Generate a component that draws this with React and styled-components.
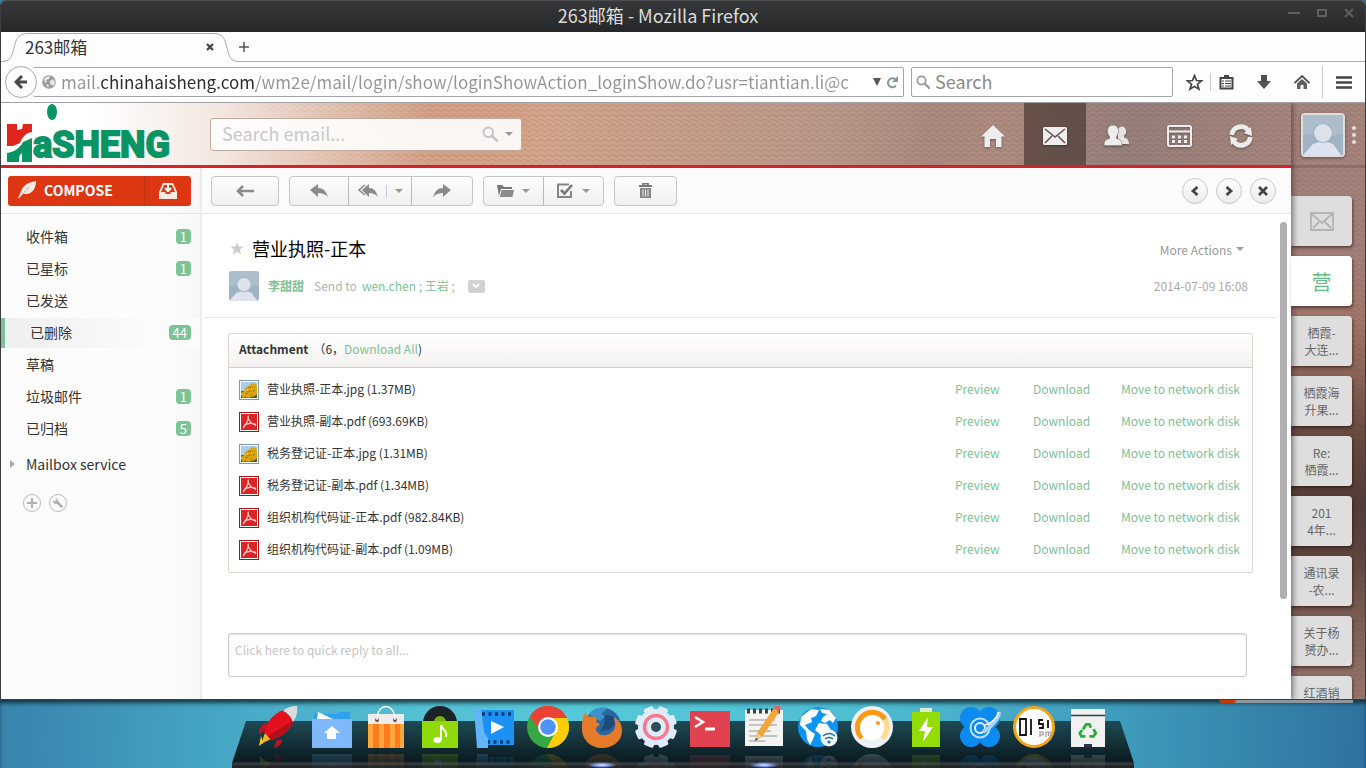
import React from "react";
import styled, { createGlobalStyle, css } from "styled-components";

const GlobalStyle = createGlobalStyle`
  * { box-sizing: border-box; }
  body {
    margin: 0;
    font-family: "Noto Sans CJK SC", "Noto Sans", sans-serif;
    font-size: 12px;
    color: #333;
  }
  button, input, textarea { font: inherit; color: inherit; margin: 0; }
  button { border: 0; background: none; padding: 0; cursor: pointer; display: flex; align-items: center; justify-content: center; }
  a { color: inherit; text-decoration: none; }
  ul { list-style: none; margin: 0; padding: 0; }
  svg { display: block; flex: none; }
`;

const GREEN = "#7cc396";

const zigzag = css`
  url("data:image/svg+xml,%3Csvg xmlns='http://www.w3.org/2000/svg' width='8' height='5'%3E%3Cpath d='M0 4l4-3 4 3' fill='none' stroke='%23502014' stroke-opacity='.13'/%3E%3C/svg%3E")
`;

/* ---------- desktop and window ---------- */

const Desktop = styled.div`
  height: 100vh;
  display: flex;
  flex-direction: column;
  overflow: hidden;
  background: linear-gradient(92deg, #3680aa 0, #3e90b5 8%, #45a5c3 17%, #53c0d4 32%, #55c8d8 45%, #4fbfd3 62%, #3f9bbc 82%, #2e739d 100%);
`;

const Window = styled.section`
  flex: 1;
  min-height: 0;
  display: flex;
  flex-direction: column;
  border: 1px solid #3b3d3e;
  border-top-color: #4b4d4e;
  border-radius: 5px 5px 0 0;
  overflow: hidden;
  background: #fdfdfd;
`;

const TitleBar = styled.header`
  position: relative;
  height: 31px;
  flex: none;
  display: flex;
  align-items: center;
  justify-content: flex-end;
  gap: 17px;
  padding: 0 11px 7px 0;
  background: linear-gradient(#36383a, #252728);
  color: #5d5f60;
`;

const WindowTitle = styled.h1`
  position: absolute;
  inset: 0 50px 0 0;
  margin: 0;
  font-size: 18px;
  font-weight: 400;
  line-height: 28px;
  text-align: center;
  color: #dcdcdc;
  pointer-events: none;
`;

const TabStrip = styled.div`
  height: 30px;
  flex: none;
  display: flex;
`;

const TabBody = styled.div`
  width: 186px;
  margin-top: 1px;
  border-top: 1px solid #a9abac;
  display: flex;
  align-items: center;
  justify-content: space-between;
  font-size: 17px;
  line-height: 24px;
  color: #2e3436;
  padding: 0 0 2px;
`;

const TabTitle = styled.span`
  margin-left: -3px;
`;

const StripRest = styled.div`
  flex: 1;
  border-bottom: 1px solid #a9abac;
  display: flex;
  align-items: center;
  padding-left: 1px;
`;

const NavBar = styled.div`
  height: 41px;
  flex: none;
  display: flex;
  align-items: center;
  padding-left: 4px;
  border-bottom: 1px solid #a0a2a3;
`;

const BackButton = styled.button`
  width: 32px;
  height: 32px;
  border: 1px solid #a5abb2;
  border-radius: 50%;
  background: #fdfdfd;
  z-index: 1;
`;

const Field = styled.div`
  height: 30px;
  display: flex;
  align-items: center;
  background: #fff;
  border: 1px solid #a3a5a6;
  border-radius: 2px;
`;

const UrlField = styled(Field)`
  flex: 1;
  min-width: 0;
  margin-left: -4px;
  padding: 0 4px 0 9px;
  border-left: 0;
  gap: 5px;
`;

const UrlInput = styled.input`
  flex: 1;
  min-width: 0;
  height: 28px;
  border: 0;
  outline: 0;
  padding: 0 0 2px;
  font-size: 17px;
  -webkit-text-fill-color: transparent;
  background: linear-gradient(90deg, #949494 39px, #2b2b2b 39px, #2b2b2b 195px, #949494 195px);
  background-clip: text;
  -webkit-background-clip: text;
`;

const SearchField = styled(Field)`
  width: 262px;
  margin: 0 6px 0 7px;
  padding: 0 4px;
  gap: 5px;
`;

const PlainInput = styled.input`
  flex: 1;
  min-width: 0;
  height: 28px;
  border: 0;
  outline: 0;
  padding: 0 0 2px;
  background: transparent;
  font-size: 18px;
  color: #555;
  &::placeholder { color: ${(p) => p.$hint || "#8c8c8c"}; opacity: 1; }
`;

const ToolIcon = styled.button`
  width: ${(p) => p.$w}px;
  height: 30px;
`;

const Rule = styled.span`
  width: 1px;
  height: ${(p) => p.$h}px;
  margin-left: ${(p) => p.$before || 0}px;
  background: #c3cad6;
`;

/* ---------- web page ---------- */

const Page = styled.div`
  flex: 1;
  min-height: 0;
  display: flex;
  overflow: hidden;
`;

const Mail = styled.div`
  flex: 1;
  min-width: 0;
  display: flex;
  flex-direction: column;
  box-shadow: 1px 0 6px rgba(0, 0, 0, 0.5);
  z-index: 1;
`;

const Banner = styled.header`
  height: 65px;
  flex: none;
  display: flex;
  align-items: center;
  border-bottom: 3px solid #d2232a;
  padding: 0 19px 0 5px;
  background:
    linear-gradient(90deg, #fff 90px, rgba(255, 255, 255, 0.75) 220px, rgba(255, 255, 255, 0) 430px),
    ${zigzag},
    linear-gradient(100deg, #d3a186 38%, #d3a58b 42%, #b8978a 65%, #aa8a80 72%, #ad8b80 78%, #96807b 87%, #a5857c 100%);
`;

const Logo = styled.a`
  width: 170px;
  align-self: stretch;
  svg { overflow: visible; }
`;

const LogoText = styled.text`
  font-family: Roboto, "Liberation Sans", sans-serif;
  font-weight: 700;
  font-size: 36px;
`;

const MailSearch = styled.form`
  width: 312px;
  height: 33px;
  margin-left: 34px;
  padding: 0 8px 0 11px;
  display: flex;
  align-items: center;
  gap: 7px;
  border: 1px solid #c3aa9f;
  border-radius: 3px;
  background: rgba(255, 255, 255, 0.9);
`;

const MainNav = styled.nav`
  margin-left: auto;
  display: flex;
  align-self: stretch;
`;

const NavTile = styled.a`
  width: 62px;
  display: flex;
  align-items: center;
  justify-content: center;
  padding-top: 3px;
  background: ${(p) => (p.$on ? "rgba(60, 45, 38, 0.6)" : "transparent")};
  svg { filter: drop-shadow(0 1px 1px rgba(0, 0, 0, 0.35)); }
`;

const Columns = styled.div`
  flex: 1;
  min-height: 0;
  display: flex;
  background: #fff;
`;

const Sidebar = styled.aside`
  width: 201px;
  flex: none;
  border-right: 2px solid #ececec;
  background: linear-gradient(90deg, #fcfcfc 170px, #f7f7f7);
`;

const ComposeArea = styled.div`
  height: 46px;
  padding: 8px 9px 8px 7px;
  border-bottom: 1px solid #e4e4e4;
  display: flex;
`;

const Compose = styled.button`
  flex: 1;
  height: 30px;
  justify-content: flex-start;
  gap: 8px;
  padding: 0 0 2px 10px;
  border-radius: 3px 0 0 3px;
  background: #dc3612;
  color: #fff;
  font-weight: 700;
  font-size: 14px;
`;

const Receive = styled.button`
  width: 47px;
  height: 30px;
  border-left: 1px solid #c03214;
  border-radius: 0 3px 3px 0;
  background: #dc3612;
`;

const FolderList = styled.ul`
  padding: 8px 0 0;
  display: flex;
  flex-direction: column;
  gap: 2px;
`;

const Folder = styled.a`
  height: 30px;
  display: flex;
  align-items: center;
  justify-content: space-between;
  padding: 0 9px 2px 25px;
  font-size: 14px;
  border-left: 0 solid ${GREEN};
  ${(p) => p.$on && css`
    border-left-width: 4px;
    background: linear-gradient(90deg, #efefef, #fbfbfb 150px);
  `}
`;

const Badge = styled.span`
  height: 15px;
  padding: 0 4px;
  border-radius: 4px;
  background: ${GREEN};
  color: #fff;
  font-size: 13px;
  line-height: 15px;
`;

const Service = styled.a`
  display: flex;
  align-items: center;
  gap: 11px;
  height: 30px;
  margin-top: 6px;
  padding: 0 0 2px 9px;
  font-size: 14px;
`;

const SideTools = styled.div`
  display: flex;
  gap: 8px;
  padding: 14px 22px;
`;

const SideTool = styled.button`
  width: 18px;
  height: 18px;
  border: 1px solid #b9b9b9;
  border-radius: 50%;
`;

const Reader = styled.main`
  flex: 1;
  min-width: 0;
  display: flex;
  flex-direction: column;
`;

const Toolbar = styled.div`
  height: 46px;
  flex: none;
  display: flex;
  align-items: center;
  gap: 10px;
  padding: 0 15px 0 9px;
  background: #fbfbfb;
  border-bottom: 1px solid #e4e4e4;
`;

const Group = styled.div`
  height: 30px;
  display: flex;
  border: 1px solid #c6c6c6;
  border-radius: 4px;
  background: linear-gradient(#fdfdfd, #f0f0f0);
`;

const ToolButton = styled.button`
  width: ${(p) => p.$w}px;
  gap: 8px;
  & + & { border-left: 1px solid #b9b9b9; }
`;

const Pager = styled.div`
  margin-left: auto;
  display: flex;
  gap: 8px;
`;

const Round = styled.button`
  width: 26px;
  height: 26px;
  border: 1px solid #c9c9c9;
  border-radius: 50%;
  background: linear-gradient(#fdfdfd, #ececec);
`;

const Viewport = styled.div`
  flex: 1;
  min-height: 0;
  display: flex;
  overflow: hidden;
`;

const Letter = styled.article`
  flex: 1;
  min-width: 0;
  padding-left: 3px;
`;

const Scroller = styled.div`
  width: 16px;
  padding: 8px 4px 0 5px;
`;

const Thumb = styled.div`
  height: 79%;
  border-radius: 4px;
  background: #b0b0b0;
`;

const LetterHead = styled.div`
  height: 104px;
  padding: 20px 27px 0 24px;
  border-bottom: 1px solid #e4e4e4;
`;

const HeadRow = styled.div`
  display: flex;
  align-items: center;
  height: ${(p) => p.$h}px;
`;

const Subject = styled.h2`
  margin: 0 auto 0 7px;
  font-size: 18px;
  line-height: 28px;
  font-weight: 400;
  color: #000;
`;

const MoreActions = styled.button`
  gap: 4px;
  margin-right: 4px;
  padding-top: 2px;
  color: #999;
`;

const Portrait = styled.div`
  width: ${(p) => p.$size}px;
  height: ${(p) => p.$size}px;
  flex: none;
  overflow: hidden;
  border-radius: ${(p) => (p.$frame ? 4 : 3)}px;
  border: ${(p) => (p.$frame ? "2px solid #dedede" : "0")};
  box-shadow: ${(p) => (p.$frame ? "0 1px 3px rgba(0, 0, 0, 0.4)" : "none")};
  svg { width: 100%; height: 100%; }
`;

const Sender = styled.a`
  margin-left: 9px;
  padding-bottom: 2px;
  font-weight: 700;
  color: ${GREEN};
`;

const Muted = styled.span`
  margin-left: 10px;
  padding-bottom: 2px;
  color: #b3b3b3;
`;

const Recipients = styled.span`
  margin: 0 13px 0 5px;
  padding-bottom: 2px;
  color: ${GREEN};
`;

const Expand = styled.button`
  width: 17px;
  height: 13px;
  border-radius: 2px;
  background: #d2d2d2;
`;

const SentAt = styled.time`
  margin-left: auto;
  padding-bottom: 2px;
  color: #aaa;
`;

const Box = styled.section`
  margin: 15px 22px 0 23px;
  border: 1px solid #dcd5ca;
  border-radius: 2px;
`;

const BoxHead = styled.h3`
  height: 34px;
  margin: 0;
  padding: 0 10px 4px;
  display: flex;
  align-items: center;
  font-size: 12px;
  font-weight: 400;
  background: linear-gradient(#fff, #f4f2f0);
  border-bottom: 1px solid #d2cec9;
  strong { margin-right: 5px; }
`;

const GreenLink = styled.a`
  color: ${GREEN};
`;

const Files = styled.table`
  width: calc(100% - 10px);
  margin: 6px 0 6px 10px;
  border-collapse: collapse;
  td { padding: 0; height: 32px; }
`;

const FileCell = styled.div`
  display: flex;
  align-items: center;
  gap: 8px;
`;

const FileName = styled.span`
  padding-bottom: 2px;
  line-height: 18px;
`;

const ActionCell = styled.td`
  width: ${(p) => p.$w}px;
  a { display: block; padding-bottom: 2px; line-height: 18px; }
`;

const QuickReply = styled.textarea`
  display: block;
  width: calc(100% - 51px);
  height: 44px;
  margin: 60px 0 0 23px;
  padding: 7px 6px;
  border: 1px solid #ccc;
  border-radius: 3px;
  box-shadow: inset 0 1px 2px rgba(0, 0, 0, 0.12);
  resize: none;
  outline: 0;
  line-height: 18px;
  &::placeholder { color: #c4c4c4; opacity: 1; }
`;

const Rail = styled.aside`
  width: 74px;
  flex: none;
  background:
    ${zigzag},
    linear-gradient(#a5857c 0, #a1807a 110px, #a37e77 170px, #a07468 220px, #8a6458 270px, #684a41 330px, #533d37 400px, #5c443d 450px, #7c6057 520px, #96756b 596px);
`;

const RailHead = styled.div`
  height: 65px;
  display: flex;
  align-items: center;
  gap: 7px;
  padding: 2px 0 0 10px;
  border-bottom: 3px solid rgba(80, 50, 45, 0.25);
`;

const Dots = styled.button`
  flex-direction: column;
  gap: 3px;
`;

const Dot = styled.span`
  width: 4px;
  height: 4px;
  border-radius: 50%;
  background: #e4e0df;
`;

const RailTabs = styled.ul`
  padding: 28px 13px 0 0;
  display: flex;
  flex-direction: column;
  gap: 10px;
`;

const RailTab = styled.a`
  height: 50px;
  display: flex;
  align-items: center;
  justify-content: center;
  text-align: center;
  line-height: 17px;
  white-space: pre-line;
  border-radius: 0 4px 4px 0;
  box-shadow: 1px 2px 3px rgba(30, 10, 5, 0.5);
  background: linear-gradient(90deg, #c9c9c9, #dedede 8px);
  color: #666;
  ${(p) => p.$on && css`
    background: #fff;
    color: #62bd84;
    font-size: 20px;
    position: relative;
    z-index: 2;
  `}
  ${(p) => p.$short && css`
    align-items: flex-start;
    padding-top: 8px;
  `}
`;

/* ---------- dock ---------- */

const DockArea = styled.footer`
  height: 68px;
  flex: none;
  position: relative;
  display: flex;
  justify-content: center;
  box-shadow: inset 0 4px 4px -1px rgba(10, 30, 40, 0.8);
`;

const BehindStrip = styled.div`
  position: absolute;
  top: 0;
  right: 13px;
  width: 134px;
  height: 3px;
  border-radius: 0 0 0 3px;
  background: linear-gradient(120deg, #c23a08 14px, #8f979d 16px);
`;

const Dock = styled.nav`
  width: 902px;
  position: relative;
  display: flex;
  justify-content: center;
  gap: 12px;
  padding-top: 6px;
  overflow: hidden;
  &::before {
    content: "";
    position: absolute;
    inset: 21px 0 0;
    background: linear-gradient(#1d4a54 0, #16353d 18px, #0a1a20 40px, #3a4246 43px, #262c2f 44px, #1c2022);
    clip-path: polygon(14px 0, calc(100% - 14px) 0, 100% 42px, 100% 100%, 0 100%, 0 42px);
  }
`;

const DockItem = styled.button`
  position: relative;
  width: 42px;
  height: 62px;
  align-items: flex-start;
  svg {
    -webkit-box-reflect: below 6px linear-gradient(transparent 60%, rgba(0, 0, 0, 0.2));
  }
  ${(p) => p.$running && css`
    &::after {
      content: "";
      position: absolute;
      bottom: 0;
      left: 6px;
      width: 30px;
      height: 6px;
      background: radial-gradient(ellipse at 50% 50%, #e2eaff 0, #6f86d0 40%, transparent 70%);
    }
  `}
`;

/* ---------- icons ---------- */

const Svg = ({ w, h = w, children, ...rest }) => (
  <svg width={w} height={h} viewBox={`0 0 ${w} ${h}`} fill="none" aria-hidden="true" {...rest}>
    {children}
  </svg>
);

const Caret = ({ color = "#999" }) => (
  <Svg w={8} h={4}><path d="M0 0h8L4 4z" fill={color} /></Svg>
);

const Magnifier = ({ w, color, sw }) => (
  <svg width={w} height={w} viewBox="0 0 16 16" fill="none" aria-hidden="true">
    <circle cx="6.3" cy="6.3" r="4.8" stroke={color} strokeWidth={sw} />
    <path d="M10 10l5 4.7" stroke={color} strokeWidth={sw + 0.6} strokeLinecap="round" />
  </svg>
);

const Person = () => (
  <svg viewBox="0 0 40 40" aria-hidden="true">
    <rect width="40" height="40" fill="#9fb3c5" />
    <path d="M0 0h40v20c-6-3-10 3-16 2S10 17 0 21z" fill="#aebdcc" />
    <path d="M0 40L10 29Q20 24 30 29L38 40z" fill="#dde2ee" />
    <circle cx="20" cy="18" r="9.5" fill="#dde2ea" stroke="#9fb3c5" strokeWidth="1.2" />
  </svg>
);

const LogoMark = () => (
  <Svg w={170} h={62} role="img" aria-label="HaiSheng">
    <path d="M1 21h10v6l5-1 1-5h9v8c-6 1-10 5-12 11l-7 3H1z" fill="#e0261c" />
    <path d="M1 59v-9c7-1 13-5 16-11l9-4v24H16v-9c-2 1-3 3-3 9z" fill="#0a9464" />
    <ellipse cx="46" cy="9" rx="5" ry="8" fill="#0a9464" />
    <LogoText x="27" y="54" fill="#0a9464" stroke="#0a9464" strokeWidth="2">aSHENG</LogoText>
  </Svg>
);

const Globe = () => (
  <Svg w={14}>
    <circle cx="7" cy="7" r="6.800" fill="#9a9a9a" />
    <path d="M2 4c2-2 4-3 6-2.500L7 4 4 5 5 7 3 8zM8 6l3-2 2 3-1 4-2-1-2-1zM4 9l3 1-1 3z" fill="#e6e6e6" />
  </Svg>
);

const ImageFile = () => (
  <Svg w={20}>
    <rect x=".5" y=".5" width="19" height="19" fill="#fff" stroke="#8298ae" />
    <rect x="2" y="2" width="16" height="16" fill="#a6cdf2" />
    <path d="M2 11h16v7H2z" fill="#4c5d18" />
    <path d="M2 13l3-2 1-3 3-2 2-2 4-1 3 2v9l-2 2-4 1-2 1-4-1-2 1-2-3z" fill="#dba40e" />
    <path d="M9 7l2 1 1-3M13 8l2-2M8 11l2 1 3-2M14 12l2-2M6 14l3-1M12 14l1 1" stroke="#a0740c" />
    <path d="M10 6l2-1M14 5l1 1M7 10l2 0M12 9l1 0" stroke="#ffe04a" />
  </Svg>
);

const PdfFile = () => (
  <Svg w={20}>
    <rect x=".5" y=".5" width="19" height="19" fill="#fff" stroke="#a81414" />
    <rect x="2" y="2" width="16" height="16" fill="#dc2424" />
    <path d="M9 3.500c1 4-2 9-5 12.500M9 4c0 5 4 8 8 9.500M5 13.500c3-2 8-2.500 12-1" stroke="#f6d4d4" strokeWidth="1.200" />
  </Svg>
);

const dockIcons = {
  Launcher: (
    <>
      <path d="M10 17c-6 1-9 6-8 12l5-4zM25 33c0 5-3 8-8 9l2-7z" fill="#c2121f" />
      <path d="M8 27L4 38l12-6z" fill="#f5b81b" />
      <path d="M6 37L2 40l2-10z" fill="#f7d02c" />
      <path d="M7 26C10 15 17 7 27 4l10 10C34 24 25 31 14 34z" fill="#e3101d" />
      <path d="M37 14C34 24 25 31 14 34l-3-4z" fill="#b50e1c" />
      <path d="M26 5c4-4 9-5 14-5 1 6-1 12-4 16-2-5-5-9-10-11z" fill="#d9dcdd" />
    </>
  ),
  Files: (
    <>
      <path d="M3 8h22l4-2h10v14H3z" fill="#2f9ff2" />
      <path d="M7 6l15 7-2 6H5z" fill="#fff" />
      <path d="M1 13h40v29H1z" fill="#7fb9fb" />
      <path d="M21 20l8 7h-4v6h-9v-6h-3z" fill="#fff" />
    </>
  ),
  Store: (
    <>
      <path d="M3 8h36v12H3z" fill="#ececec" />
      <path d="M3 18h36v24H3z" fill="#ffa63d" />
      <path d="M8 18h6v24H8zM19 18h6v24h-6zM30 18h5v24h-5z" fill="#ff7a1a" />
      <circle cx="12" cy="14" r="2" fill="#7c4a20" /><circle cx="30" cy="14" r="2" fill="#7c4a20" />
      <path d="M12 14C12-4 30-4 30 14" stroke="#fafafa" strokeWidth="1.500" />
    </>
  ),
  Music: (
    <>
      <circle cx="21" cy="17" r="17" fill="#1c2328" />
      <circle cx="21" cy="16" r="6" fill="#7cae12" />
      <path d="M3 15h36v27H3z" fill="#8fdb0a" />
      <path d="M22 19v15" stroke="#fff" strokeWidth="2" />
      <ellipse cx="18.500" cy="34" rx="4" ry="3" fill="#fff" />
      <path d="M22 19c1 5 7 5 5 12" stroke="#fff" strokeWidth="2" />
    </>
  ),
  Movie: (
    <>
      <path d="M6 4h35v35H6z" fill="#1b90f5" />
      <path d="M9 8h30M14 36h26" stroke="#0c3c68" strokeWidth="3.500" strokeDasharray="3 3.500" />
      <path d="M1 3l7-1 3 24 4 6v10H4z" fill="#62b4fb" />
      <path d="M18 15l13 6-13 7z" fill="#fff" />
    </>
  ),
  Chrome: (
    <>
      <circle cx="21" cy="21" r="21" fill="#35a844" />
      <path d="M3 10A21 21 0 0 1 40 12H21l-8 13z" fill="#ea4335" />
      <path d="M40 12A21 21 0 0 1 20 42l9-17-5-13z" fill="#fccc09" />
      <circle cx="21" cy="21" r="10" fill="#fff" />
      <circle cx="21" cy="21" r="7.800" fill="#4e93f7" />
    </>
  ),
  Firefox: (
    <>
      <circle cx="22" cy="20" r="18" fill="#2868a0" />
      <path d="M8 8C12 2 20 0 27 2l-7 6 4 2-5 5z" fill="#3c93cc" />
      <path d="M4 7l4 4c3-1 5 0 8 1l-1 4 4 2-4 4c0 5 4 8 10 7 6-1 10-6 9-12l-1-6c6 4 8 8 8 14 0 10-9 17-20 17S1 34 1 23C1 17 1 12 4 7z" fill="#e57a28" />
      <path d="M24 9l8 1 2 8-6 6-9 1 4-6z" fill="#1b4c7c" />
    </>
  ),
  Settings: (
    <>
      {[0, 45, 90, 135].map((a) => (
        <rect key={a} x="16" y="0" width="10" height="42" rx="2" fill="#dfeafa" transform={`rotate(${a + 22} 21 21)`} />
      ))}
      <circle cx="21" cy="21" r="18" fill="#dfeafa" />
      <circle cx="21" cy="21" r="11.500" stroke="#f8788e" strokeWidth="3.500" />
      <circle cx="21" cy="21" r="5" fill="#2b4d57" />
    </>
  ),
  Terminal: (
    <>
      <path d="M1 5h40v36H1z" fill="#e0434f" />
      <path d="M6 11l8 5-8 5" stroke="#fff" strokeWidth="2.500" />
      <path d="M16 23h10" stroke="#fff" strokeWidth="3" />
    </>
  ),
  Editor: (
    <>
      <path d="M2 4h38v36H2z" fill="#f3f3f1" />
      <path d="M4 5h34" stroke="#33474c" strokeWidth="5" strokeDasharray="3 3" />
      <path d="M6 14h26M6 19h28M6 25h22M6 30h28M6 35h16" stroke="#b4b4b4" strokeWidth="1.500" />
      <path d="M12 35l2-8L31 2l5 4-17 25z" fill="#f2a53a" />
      <path d="M12 35l2-8 5 4z" fill="#e9cfa0" /><path d="M12 35l1-3 2 1z" fill="#222" />
      <path d="M31 2l2-4 5 3-2 5z" fill="#e06666" />
    </>
  ),
  Network: (
    <>
      <circle cx="21" cy="21" r="20" fill="#0b95f4" />
      <path d="M4 11L14 3l8 1-3 6-5 2 1 4-7 3 4 5 6 4-2 5-3 6-3-6-1-8-6-6zM23 3l9 1 7 8-3 5-3-3-5 3-4-2 2-4 4-3-5-1zM22 17l8 1 4 6-3 5-4 7-4-8-5-4z" fill="#fff" />
      <circle cx="32" cy="32" r="8.500" fill="#f2f8fc" />
      <path d="M26 30q6-5 12 0M28 33q4-3 8 0" stroke="#146aa8" strokeWidth="1.500" /><circle cx="32" cy="36" r="1.500" fill="#146aa8" />
    </>
  ),
  Disk: (
    <>
      <circle cx="21" cy="21" r="21" fill="#edf1f5" />
      <path d="M11 32A15 15 0 1 1 34 13" stroke="#ff990f" strokeWidth="5" />
      <path d="M34 13A15 15 0 0 1 31 32" stroke="#ffd98c" strokeWidth="5" />
      <circle cx="21" cy="22" r="12" fill="#fff" />
      <circle cx="27" cy="17" r="2" fill="#ff990f" />
    </>
  ),
  Power: (
    <>
      <path d="M15 2h12v5H15z" fill="#dfe9cc" />
      <path d="M7 6h28v35H7z" fill="#93dc06" />
      <path d="M23 11l-9 14h6l-2 11 10-15h-6z" fill="#fff" />
    </>
  ),
  Viewer: (
    <>
      <g fill="#0d8bf0"><circle cx="12" cy="12" r="11" /><circle cx="30" cy="12" r="11" /><circle cx="12" cy="30" r="11" /><circle cx="30" cy="30" r="11" /><path d="M9 9h24v24H9z" /></g>
      <circle cx="21" cy="22" r="9.500" stroke="#bfe0fc" strokeWidth="2" />
      <circle cx="21" cy="22" r="5" stroke="#e7f4ff" strokeWidth="2" />
      <path d="M40 6c0 6-6 14-16 20" stroke="#a4d4fb" strokeWidth="4" />
      <path d="M40 6c-2 6-8 12-14 13" stroke="#fff" strokeWidth="1.500" />
    </>
  ),
  Clock: (
    <>
      <circle cx="21" cy="21" r="19.500" fill="#fff" stroke="#f7a41a" strokeWidth="3" />
      <path d="M7 13h6v16H7zM18 13v16M30 14h-4v4h4v4h-4M35 14v8" stroke="#111" strokeWidth="1.800" />
      <path d="M27 31v-5h3v3h-3M33 31v-5h5v5M35.500 26v4" stroke="#9a9a9a" strokeWidth="1.200" />
    </>
  ),
  Trash: (
    <>
      <path d="M4 3h34v38H4z" fill="#f1f1f1" />
      <path d="M4 9.500h34" stroke="#1f464f" strokeWidth="1.500" />
      <g transform="translate(4 4) scale(.8)">
        <path d="M15 24l4-6h4l2 4M28 24l3 5-3 4h-5M18 33h-5l-2-4 3-4" stroke="#27ae38" strokeWidth="3.500" />
      </g>
      <path d="M17 41v-3h8v3z" fill="#35344e" />
    </>
  ),
};

/* ---------- data ---------- */

const folders = [
  ["收件箱", 1], ["已星标", 1], ["已发送", 0], ["已删除", 44], ["草稿", 0], ["垃圾邮件", 1], ["已归档", 5],
];

const files = [
  ["营业执照-正本.jpg (1.37MB)", "jpg"],
  ["营业执照-副本.pdf (693.69KB)", "pdf"],
  ["税务登记证-正本.jpg (1.31MB)", "jpg"],
  ["税务登记证-副本.pdf (1.34MB)", "pdf"],
  ["组织机构代码证-正本.pdf (982.84KB)", "pdf"],
  ["组织机构代码证-副本.pdf (1.09MB)", "pdf"],
];

const railTabs = ["栖霞-\n大连...", "栖霞海\n升果...", "Re:\n栖霞...", "201\n4年...", "通讯录\n-农...", "关于杨\n赟办...", "红酒销"];

const running = ["Firefox", "Editor"];

/* ---------- sections ---------- */

function BrowserChrome() {
  return (
    <>
      <TitleBar>
        <WindowTitle>263邮箱 - Mozilla Firefox</WindowTitle>
        <button aria-label="Minimize"><Svg w={12} h={10}><path d="M0 5h12" stroke="currentColor" strokeWidth="2" /></Svg></button>
        <button aria-label="Maximize"><Svg w={10} h={8}><path d="M1 1h8v6H1z" stroke="currentColor" strokeWidth="2" /></Svg></button>
        <button aria-label="Close"><Svg w={10}><path d="M1 1l8 8M9 1L1 9" stroke="currentColor" strokeWidth="2" /></Svg></button>
      </TitleBar>
      <TabStrip>
        <Svg w={27} h={30}><path d="M0 29.500h2C11 29 11 22 13 16 15 7 17 1.500 27 1.500" stroke="#a9abac" /></Svg>
        <TabBody>
          <TabTitle>263邮箱</TabTitle>
          <button aria-label="Close tab"><Svg w={8}><path d="M1 1l6 6M7 1L1 7" stroke="#444" strokeWidth="2.200" /></Svg></button>
        </TabBody>
        <Svg w={24} h={30}><path d="M24 29.500C15 29 15 22 13 16 11 7 9 1.500 0 1.500" stroke="#a9abac" /></Svg>
        <StripRest>
          <button aria-label="New tab"><Svg w={10}><path d="M0 5h10M5 0v10" stroke="#555" strokeWidth="1.500" /></Svg></button>
        </StripRest>
      </TabStrip>
      <NavBar>
        <BackButton aria-label="Back">
          <Svg w={14}><path d="M13 7H3M8 1L2 7l6 6" stroke="#4a4a4a" strokeWidth="3" /></Svg>
        </BackButton>
        <UrlField>
          <Globe />
          <UrlInput aria-label="Address" readOnly value="mail.chinahaisheng.com/wm2e/mail/login/show/loginShowAction_loginShow.do?usr=tiantian.li@c" />
          <button aria-label="History"><Svg w={8}><path d="M0 0h8L4 8z" fill="#555" /></Svg></button>
          <button aria-label="Reload"><Svg w={13}><path d="M10 9.500A4.500 4.500 0 1 1 9.500 3.500" stroke="#8296a5" strokeWidth="2" /><path d="M12 0v6H6z" fill="#8296a5" /></Svg></button>
        </UrlField>
        <SearchField>
          <Magnifier w={14} color="#999" sw={2} />
          <PlainInput aria-label="Search" placeholder="Search" />
        </SearchField>
        <ToolIcon $w={31} aria-label="Bookmark">
          <Svg w={17}><path d="M8.500 1.500l2 5 5 .3-4 3.400 1.400 5-4.400-2.800L4 15.200l1.500-5-4-3.400 5-.3z" stroke="#444" strokeWidth="1.700" /></Svg>
        </ToolIcon>
        <Rule $h={18} />
        <ToolIcon $w={30} aria-label="Bookmarks list">
          <Svg w={15}><path d="M1.500 3h12v10.500h-12z" fill="#fff" stroke="#444" strokeWidth="2" /><path d="M5 0h5v3H5z" fill="#444" /><path d="M3 6h2M6 6h6M3 8.500h2M6 8.500h6M3 11h2M6 11h6" stroke="#444" /></Svg>
        </ToolIcon>
        <ToolIcon $w={45} aria-label="Downloads">
          <Svg w={14}><path d="M4 0h6v6h4l-7 8-7-8h4z" fill="#505050" /></Svg>
        </ToolIcon>
        <ToolIcon $w={32} aria-label="Home">
          <Svg w={16} h={15}><path d="M.5 8L8 1l7.500 7" stroke="#505050" strokeWidth="1.800" /><path d="M3 8.500l5-4.500 5 4.500V14H9.500v-4h-3v4H3z" fill="#606060" /></Svg>
        </ToolIcon>
        <Rule $h={32} $before={4} />
        <ToolIcon $w={42} aria-label="Menu">
          <Svg w={16} h={13}><path d="M0 1.500h16M0 6.500h16M0 11.500h16" stroke="#444" strokeWidth="2.600" /></Svg>
        </ToolIcon>
      </NavBar>
    </>
  );
}

function MailBanner() {
  return (
    <Banner>
      <Logo href="#" aria-label="HaiSheng"><LogoMark /></Logo>
      <MailSearch>
        <PlainInput $hint="#c9c9c9" aria-label="Search email" placeholder="Search email..." />
        <Magnifier w={16} color="#c4c4c4" sw={2} />
        <Caret />
      </MailSearch>
      <MainNav>
        <NavTile href="#" aria-label="Home">
          <Svg w={24}><path d="M12 1L0 12.500h3.500V23H9v-8h6v8h5.500V12.500H24z" fill="#ededed" /></Svg>
        </NavTile>
        <NavTile href="#" aria-label="Mail" $on>
          <Svg w={24} h={18}><rect width="24" height="18" rx="1.500" fill="#eee" /><path d="M2 2l10 8 10-8M2 16l7-7M22 16l-7-7" stroke="#665048" strokeWidth="1.500" /></Svg>
        </NavTile>
        <NavTile href="#" aria-label="Contacts">
          <Svg w={26} h={21}>
            <path d="M14 19h11c0-4-2-6-5-6.500v-2C24 8 22 1.500 18 1.500c-3 0-5 3-4 7z" fill="#e4e4e4" />
            <path d="M0 20.500c0-5 2-6 5.500-7v-2C2 8 3 0 9 0s7 8 3.500 11.500v2c4 1 5.500 2 5.500 7z" fill="#eee" stroke="#9a8079" strokeWidth=".8" />
          </Svg>
        </NavTile>
        <NavTile href="#" aria-label="Calendar">
          <Svg w={25} h={22}><rect x="1" y="1" width="23" height="20" rx="1.500" stroke="#eee" strokeWidth="2" /><path d="M1 6.500h23" stroke="#eee" strokeWidth="2" /><path d="M5 12h15M5 16.500h15" stroke="#eee" strokeWidth="3" strokeDasharray="3 3" /></Svg>
        </NavTile>
        <NavTile href="#" aria-label="Sync">
          <Svg w={24}>
            <path d="M2.700 11A9.300 9.300 0 0 1 19 6M21.300 13A9.300 9.300 0 0 1 5 18" stroke="#ececec" strokeWidth="4.800" />
            <path d="M22 3l1 9-8-3zM2 21l-1-9 8 3z" fill="#ececec" />
          </Svg>
        </NavTile>
      </MainNav>
    </Banner>
  );
}

function FolderPane() {
  return (
    <Sidebar>
      <ComposeArea>
        <Compose>
          <Svg w={18}><path d="M0 17L4 8C7 3 12 1 18 0c0 7-3 12-9 13H5L1 17.500z" fill="#f9e9e4" /><path d="M1 17L11 6" stroke="#dc9a88" /></Svg>
          COMPOSE
        </Compose>
        <Receive aria-label="Receive mail">
          <Svg w={18} h={16}><path d="M4 0h10l4 9v7H0V9z" fill="#fbe9e4" /><path d="M5 2h8l3 7h-4l-1 2H7L6 9H2z" fill="#dc3612" /><path d="M9 2v5M6 5l3 3 3-3" stroke="#fff" strokeWidth="2" /></Svg>
        </Receive>
      </ComposeArea>
      <FolderList>
        {folders.map(([name, count]) => (
          <li key={name}>
            <Folder href="#" $on={name === "已删除"}>
              {name}
              {count > 0 && <Badge>{count}</Badge>}
            </Folder>
          </li>
        ))}
      </FolderList>
      <Service href="#">
        <Svg w={5} h={8}><path d="M0 0l5 4-5 4z" fill="#aaa" /></Svg>
        Mailbox service
      </Service>
      <SideTools>
        <SideTool aria-label="Add folder"><Svg w={10}><path d="M0 5h10M5 0v10" stroke="#b0b0b0" strokeWidth="2" /></Svg></SideTool>
        <SideTool aria-label="Manage folders"><Svg w={10}><path d="M3.500 3.500l5 5" stroke="#b0b0b0" strokeWidth="2.600" strokeLinecap="round" /><path d="M2 0l2 2-2 2-2-2c-.5 3 2 5 4 3.500C6.500 4 5 0 2 0z" fill="#b0b0b0" /></Svg></SideTool>
      </SideTools>
    </Sidebar>
  );
}

const ReplyArrow = ({ flip }) => (
  <Svg w={18} h={14}>
    <g transform={flip ? "matrix(-1 0 0 1 18 0)" : undefined}>
      <path d="M0 6l8-6v4c5 0 8 3 10 9-3-3-6-4-10-4v4z" fill="#8b8b8b" />
    </g>
  </Svg>
);

function MailToolbar() {
  return (
    <Toolbar>
      <Group>
        <ToolButton $w={66} aria-label="Back to list"><Svg w={18} h={12}><path d="M18 6H3M7 1L2 6l5 5" stroke="#8b8b8b" strokeWidth="2.600" /></Svg></ToolButton>
      </Group>
      <Group>
        <ToolButton $w={58} aria-label="Reply"><ReplyArrow /></ToolButton>
        <ToolButton $w={63} aria-label="Reply all">
          <Svg w={20} h={14}><path d="M7 1L1 6l6 5" stroke="#8b8b8b" strokeWidth="1.600" /><path d="M4 6l7-6v4c5 0 7 3 9 9-3-3-5-4-9-4v4z" fill="#8b8b8b" /></Svg>
          <Rule $h={12} />
          <Caret />
        </ToolButton>
        <ToolButton $w={61} aria-label="Forward"><ReplyArrow flip /></ToolButton>
      </Group>
      <Group>
        <ToolButton $w={59} aria-label="Move to folder">
          <Svg w={17} h={12}><path d="M0 0h5l2 2h8v2H4L2 11z" fill="#777" /><path d="M4.500 5H17l-1.500 7H3z" fill="#8b8b8b" /></Svg>
          <Caret />
        </ToolButton>
        <ToolButton $w={60} aria-label="Mark">
          <Svg w={17} h={15}><path d="M12 1.500H1v12.500h13V8" stroke="#858585" strokeWidth="2" /><path d="M4 7l3.500 3.500L15 2" stroke="#777" strokeWidth="2.600" /></Svg>
          <Caret />
        </ToolButton>
      </Group>
      <Group>
        <ToolButton $w={61} aria-label="Delete">
          <Svg w={13} h={15}><path d="M0 3h13M4 2V.700h5V2" stroke="#777" strokeWidth="1.800" /><path d="M1 5h11v10H1z" fill="#858585" /><path d="M4 6.500v7M6.500 6.500v7M9 6.500v7" stroke="#f0f0f0" /></Svg>
        </ToolButton>
      </Group>
      <Pager>
        <Round aria-label="Previous mail"><Svg w={10}><path d="M7.500 1L3 5l4.500 4" stroke="#444" strokeWidth="2.800" /></Svg></Round>
        <Round aria-label="Next mail"><Svg w={10}><path d="M2.500 1L7 5 2.500 9" stroke="#444" strokeWidth="2.800" /></Svg></Round>
        <Round aria-label="Close mail"><Svg w={10}><path d="M1 1l8 8M9 1L1 9" stroke="#444" strokeWidth="2.600" /></Svg></Round>
      </Pager>
    </Toolbar>
  );
}

function MailLetter() {
  return (
    <Letter>
      <LetterHead>
        <HeadRow $h={28}>
          <Svg w={16} h={14}><path d="M8 1l1.700 4.500 4.800.2-3.700 3 1.200 4.800L8 10.800l-4 2.700 1.200-4.800-3.700-3 4.800-.2z" fill="#cdcdcd" /></Svg>
          <Subject>营业执照-正本</Subject>
          <MoreActions>More Actions <Caret /></MoreActions>
        </HeadRow>
        <HeadRow $h={48}>
          <Portrait $size={30}><Person /></Portrait>
          <Sender href="#">李甜甜</Sender>
          <Muted>Send to</Muted>
          <Recipients><a href="#">wen.chen</a> ; <a href="#">王岩</a> ;</Recipients>
          <Expand aria-label="Show details"><Svg w={8} h={6}><path d="M1 1l3 3 3-3" stroke="#fff" strokeWidth="1.800" /></Svg></Expand>
          <SentAt>2014-07-09 16:08</SentAt>
        </HeadRow>
      </LetterHead>
      <Box>
        <BoxHead>
          <strong>Attachment</strong>（6，<GreenLink href="#">Download All</GreenLink>)
        </BoxHead>
        <Files>
          <tbody>
            {files.map(([name, kind]) => (
              <tr key={name}>
                <td><FileCell>{kind === "pdf" ? <PdfFile /> : <ImageFile />}<FileName>{name}</FileName></FileCell></td>
                <ActionCell $w={78}><GreenLink href="#">Preview</GreenLink></ActionCell>
                <ActionCell $w={88}><GreenLink href="#">Download</GreenLink></ActionCell>
                <ActionCell $w={131}><GreenLink href="#">Move to network disk</GreenLink></ActionCell>
              </tr>
            ))}
          </tbody>
        </Files>
      </Box>
      <QuickReply aria-label="Quick reply" placeholder="Click here to quick reply to all..." />
    </Letter>
  );
}

function SideRail() {
  return (
    <Rail>
      <RailHead>
        <Portrait $size={44} $frame><Person /></Portrait>
        <Dots aria-label="Account menu"><Dot /><Dot /><Dot /></Dots>
      </RailHead>
      <RailTabs>
        <li><RailTab href="#" aria-label="Mail"><Svg w={24} h={19}><path d="M1 1h22v17H1zM2 2l10 9L22 2M3 16l6-6M21 16l-6-6" stroke="#b4b4b4" strokeWidth="1.800" /></Svg></RailTab></li>
        <li><RailTab href="#" $on>营</RailTab></li>
        {railTabs.map((t) => <li key={t}><RailTab href="#" $short={!t.includes("\n")}>{t}</RailTab></li>)}
      </RailTabs>
    </Rail>
  );
}

export default function App() {
  return (
    <Desktop>
      <GlobalStyle />
      <Window>
        <BrowserChrome />
        <Page>
          <Mail>
            <MailBanner />
            <Columns>
              <FolderPane />
              <Reader>
                <MailToolbar />
                <Viewport>
                  <MailLetter />
                  <Scroller><Thumb /></Scroller>
                </Viewport>
              </Reader>
            </Columns>
          </Mail>
          <SideRail />
        </Page>
      </Window>
      <DockArea>
        <BehindStrip />
        <Dock aria-label="Dock">
          {Object.entries(dockIcons).map(([name, art]) => (
            <DockItem key={name} aria-label={name} $running={running.includes(name)}>
              <Svg w={42}>{art}</Svg>
            </DockItem>
          ))}
        </Dock>
      </DockArea>
    </Desktop>
  );
}
